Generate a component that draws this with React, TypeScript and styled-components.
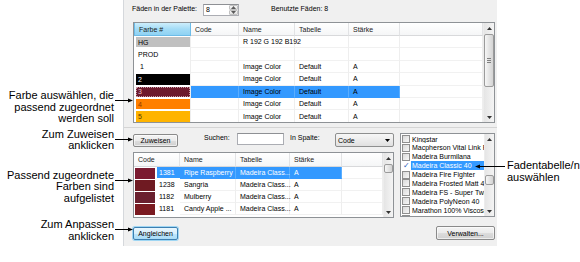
import React from "react";
import styled, { createGlobalStyle } from "styled-components";

const UI = `"Liberation Sans", Arial, sans-serif`;

const GlobalStyle = createGlobalStyle`
  html, body { margin: 0; padding: 0; background: #ffffff; }
  body { font-family: ${UI}; }
  * { box-sizing: border-box; }
`;

/* ---------- page + callouts ---------- */

const Stage = styled.div`
  display: flex;
  width: 580px;
  height: 262px;
  overflow: hidden;
  background: #ffffff;
`;

const NotesLeft = styled.div`
  position: relative;
  z-index: 2;
  flex: none;
  width: 123px;
  display: flex;
  flex-direction: column;
  align-items: flex-end;
  padding-top: 90px;
`;

const NotesRight = styled.div`
  position: relative;
  z-index: 2;
  flex: 1;
  display: flex;
  flex-direction: column;
  align-items: flex-start;
  padding-top: 160px;
`;

const LeftCallout = styled.div<{ $gap: number }>`
  display: flex;
  align-items: flex-start;
  margin-top: ${(p) => p.$gap}px;
  margin-right: -10px;
`;

const RightCallout = styled.div`
  display: flex;
  align-items: flex-start;
  margin-left: -22px;
`;

const NoteText = styled.div<{ $align: "left" | "right" }>`
  font-family: ${UI};
  font-size: 11px;
  line-height: 11.5px;
  color: #000;
  white-space: nowrap;
  text-align: ${(p) => p.$align};
`;

const PointRight = styled.svg`
  flex: none;
  display: block;
  margin: 8px 0 0 1px;
`;

const PointLeft = styled.svg`
  flex: none;
  display: block;
  margin: 4px 2px 0 0;
`;

const ArrowToRight = () => (
  <PointRight width="18" height="6" viewBox="0 0 18 6">
    <line x1="0" y1="2.5" x2="14" y2="2.5" stroke="#000" strokeWidth="1" />
    <polygon points="18,2.5 13,0.5 13,4.5" fill="#000" />
  </PointRight>
);

const ArrowToLeft = () => (
  <PointLeft width="30" height="6" viewBox="0 0 30 6">
    <line x1="4" y1="2.5" x2="30" y2="2.5" stroke="#000" strokeWidth="1" />
    <polygon points="0,2.5 5,0.5 5,4.5" fill="#000" />
  </PointLeft>
);

/* ---------- dialog panel ---------- */

const Panel = styled.div`
  flex: none;
  width: 374px;
  height: 246px;
  background: #f0f0f0;
  border-left: 1px solid #d5d8dc;
  display: flex;
  flex-direction: column;
  font-family: ${UI};
  font-size: 7px;
  color: #000;
`;

const TopBar = styled.div`
  height: 22px;
  display: flex;
  align-items: flex-start;
  padding: 4px 0 0 8px;
`;

const BarLabel = styled.span<{ $w?: number; $ml?: number }>`
  flex: none;
  width: ${(p) => (p.$w ? `${p.$w}px` : "auto")};
  margin-left: ${(p) => p.$ml ?? 0}px;
  line-height: 9px;
  white-space: nowrap;
`;

const Spinner = styled.div`
  flex: none;
  width: 36px;
  height: 12px;
  display: flex;
  background: #fff;
  border: 1px solid #abadb3;
  border-top-color: #8e9094;
`;

const SpinValue = styled.span`
  flex: 1;
  padding-left: 2px;
  line-height: 10px;
`;

const SpinButtons = styled.div`
  flex: none;
  width: 9px;
  display: flex;
  flex-direction: column;
`;

const SpinButton = styled.div`
  flex: 1;
  display: flex;
  align-items: center;
  justify-content: center;
  background: linear-gradient(#f6f6f6, #e2e2e2);
  border: 1px solid #c2c2c2;
  border-radius: 1px;
`;

const Tri = ({ up, color = "#5a5a5a" }: { up?: boolean; color?: string }) => (
  <svg width="5" height="3" viewBox="0 0 5 3" style={{ display: "block" }}>
    <polygon points={up ? "0,3 5,3 2.5,0" : "0,0 5,0 2.5,3"} fill={color} />
  </svg>
);

const Frame = styled.div<{ $w?: number; $h: number; $ml?: number; $mt?: number }>`
  flex: none;
  width: ${(p) => (p.$w ? `${p.$w}px` : "auto")};
  height: ${(p) => p.$h}px;
  margin-left: ${(p) => p.$ml ?? 0}px;
  margin-top: ${(p) => p.$mt ?? 0}px;
  display: flex;
  border: 1px solid #8e9296;
  background: #fff;
`;

const Grid = styled.div<{ $cols: string; $head: number; $row: number }>`
  flex: 1;
  display: grid;
  grid-template-columns: ${(p) => p.$cols};
  grid-template-rows: ${(p) => p.$head}px;
  grid-auto-rows: ${(p) => p.$row}px;
  align-content: start;
  overflow: hidden;
  background: #ffffff;
`;

const HeadCell = styled.div<{ $active?: boolean }>`
  display: flex;
  align-items: center;
  padding-left: 4px;
  white-space: nowrap;
  overflow: hidden;
  color: #1b1b1b;
  border-right: 1px solid ${(p) => (p.$active ? "#6cbce8" : "#e2e3e5")};
  border-bottom: 1px solid ${(p) => (p.$active ? "#6cbce8" : "#d8d9db")};
  border-left: ${(p) => (p.$active ? "1px solid #6cbce8" : "none")};
  background: ${(p) =>
    p.$active
      ? "linear-gradient(#cdeefc, #a4dcf6 50%, #8fd2f3)"
      : "linear-gradient(#ffffff, #f5f6f7)"};
`;

const Cell = styled.div<{ $sel?: boolean; $light?: boolean }>`
  display: flex;
  align-items: center;
  padding-left: 4px;
  white-space: nowrap;
  background: ${(p) => (p.$sel ? "#3399ff" : "transparent")};
  color: ${(p) => (p.$light ? "#ffffff" : "#000000")};
  border-right: 1px solid ${(p) => (p.$sel ? "#5aaeff" : "#eeeeee")};
  border-bottom: 1px solid ${(p) => (p.$sel ? "#3399ff" : "#f1f1f1")};
`;

const FarbeCell = styled.div`
  display: flex;
  padding: 1px 0 1px 2px;
  background: #fff;
  border-right: 1px solid #eeeeee;
`;

const Swatch = styled.div<{ $bg: string; $fg: string; $focus?: boolean; $indent?: number }>`
  flex: 1;
  display: flex;
  align-items: center;
  padding-left: ${(p) => 2 + (p.$indent ?? 0)}px;
  background: ${(p) => p.$bg};
  color: ${(p) => p.$fg};
  outline: ${(p) => (p.$focus ? "1px dotted #c79aa6" : "none")};
  outline-offset: -1px;
`;

/* ---------- scroll bars ---------- */

const ScrollBar = styled.div<{ $w: number }>`
  flex: none;
  width: ${(p) => p.$w}px;
  display: flex;
  flex-direction: column;
  background: linear-gradient(90deg, #e5e5e5, #f4f4f4);
  border-left: 1px solid #ececec;
`;

const ScrollArrow = styled.div`
  flex: none;
  height: 10px;
  display: flex;
  align-items: center;
  justify-content: center;
`;

const ScrollLane = styled.div`
  flex: 1;
  display: flex;
  flex-direction: column;
`;

const ScrollThumb = styled.div<{ $top: number; $h: number }>`
  margin: ${(p) => p.$top}px 0 0 0;
  height: ${(p) => p.$h}px;
  border: 1px solid #9b9b9b;
  border-radius: 2px;
  background: linear-gradient(90deg, #f6f6f6, #e4e4e4 50%, #d4d4d4);
  display: flex;
  flex-direction: column;
  align-items: center;
  justify-content: center;
  gap: 1px;
`;

const Grip = styled.span`
  display: block;
  width: 4px;
  height: 1px;
  background: #7f7f7f;
`;

const Scroll = ({ w, top, h, grip }: { w: number; top: number; h: number; grip?: boolean }) => (
  <ScrollBar $w={w}>
    <ScrollArrow>
      <Tri up color="#333" />
    </ScrollArrow>
    <ScrollLane>
      <ScrollThumb $top={top} $h={h}>
        {grip && (
          <>
            <Grip />
            <Grip />
            <Grip />
          </>
        )}
      </ScrollThumb>
    </ScrollLane>
    <ScrollArrow>
      <Tri color="#333" />
    </ScrollArrow>
  </ScrollBar>
);

/* ---------- bottom area ---------- */

const Divider = styled.div`
  flex: none;
  height: 1px;
  margin-top: 4px;
  background: #d5d5d5;
`;

const BottomGrid = styled.div`
  display: grid;
  grid-template-columns: 261px 95px;
  column-gap: 6px;
  row-gap: 8px;
  margin-top: 5px;
  padding-left: 9px;
`;

const Column = styled.div<{ $end?: boolean }>`
  display: flex;
  flex-direction: column;
  align-items: ${(p) => (p.$end ? "flex-end" : "stretch")};
`;

const ControlsRow = styled.div`
  height: 14px;
  display: flex;
  align-items: flex-start;
`;

const Button = styled.button<{ $w: number; $h: number; $mt?: number; $default?: boolean }>`
  flex: none;
  width: ${(p) => p.$w}px;
  height: ${(p) => p.$h}px;
  margin: ${(p) => p.$mt ?? 0}px 0 0 0;
  padding: 0;
  font-family: ${UI};
  font-size: 7px;
  color: #000;
  border-radius: 2px;
  border: 1px solid ${(p) => (p.$default ? "#3c7fb1" : "#8a8a8a")};
  background: ${(p) =>
    p.$default
      ? "linear-gradient(#e9f6fd, #d6effc 50%, #bfe6fb 50%, #a9dcf7)"
      : "linear-gradient(#f4f4f4, #ebebeb 50%, #dddddd 50%, #d0d0d0)"};
  box-shadow: ${(p) => (p.$default ? "0 0 0 1px #9fd6f3" : "inset 0 0 0 1px rgba(255,255,255,0.6)")};
`;

const TextBox = styled.div<{ $w: number }>`
  flex: none;
  width: ${(p) => p.$w}px;
  height: 12px;
  background: #fff;
  border: 1px solid #abadb3;
  border-top-color: #8e9094;
`;

const Combo = styled.div`
  flex: none;
  width: 59px;
  height: 14px;
  display: flex;
  align-items: center;
  justify-content: space-between;
  padding: 0 3px 0 2px;
  border: 1px solid #8e8f8f;
  border-radius: 2px;
  background: linear-gradient(#f7f7f7, #ececec 50%, #e0e0e0);
`;

const CodeCell = styled.div`
  display: flex;
  padding: 1px 0 0 1px;
  background: #fff;
`;

const MiniSwatch = styled.div<{ $bg: string }>`
  flex: none;
  width: 20px;
  height: 11px;
  background: ${(p) => p.$bg};
`;

const CodeText = styled.div<{ $sel?: boolean }>`
  flex: 1;
  display: flex;
  align-items: center;
  margin: -1px 0 1px 2px;
  padding-left: 2px;
  background: ${(p) => (p.$sel ? "#3399ff" : "transparent")};
  color: ${(p) => (p.$sel ? "#fff" : "#000")};
`;

const ThreadItems = styled.div`
  flex: 1;
  overflow: hidden;
  padding-top: 0.5px;
`;

const ThreadItem = styled.div`
  height: 8.9px;
  display: flex;
  align-items: center;
  white-space: nowrap;
`;

const Check = styled.span<{ $on?: boolean }>`
  flex: none;
  width: 8px;
  height: 8px;
  margin: 0 1px 0 1px;
  display: flex;
  align-items: center;
  justify-content: center;
  border: ${(p) => (p.$on ? "none" : "1px solid #8f8f8f")};
  background: ${(p) => (p.$on ? "transparent" : "linear-gradient(135deg, #d9d9d9, #f7f7f7)")};
  color: #2f62b8;
  font-size: 8px;
  line-height: 8px;
`;

const ThreadName = styled.span<{ $sel?: boolean }>`
  flex: 1;
  height: 8.9px;
  line-height: 9px;
  padding-left: 1px;
  overflow: hidden;
  background: ${(p) => (p.$sel ? "#3399ff" : "transparent")};
  color: ${(p) => (p.$sel ? "#fff" : "#000")};
`;

/* ---------- data ---------- */

type TopRow = {
  id: string;
  bg: string;
  fg: string;
  name?: string;
  table?: string;
  strength?: string;
  selected?: boolean;
  indent?: number;
};

const TOP_ROWS: TopRow[] = [
  { id: "HG", bg: "#c0c0c0", fg: "#000", name: "R 192 G 192 B192" },
  { id: "PROD", bg: "#ffffff", fg: "#000" },
  { id: "1", bg: "#ffffff", fg: "#000", name: "Image Color", table: "Default", strength: "A", indent: 2 },
  { id: "2", bg: "#000000", fg: "#ffffff", name: "Image Color", table: "Default", strength: "A" },
  { id: "3", bg: "#6e1a2d", fg: "#e9c2c9", name: "Image Color", table: "Default", strength: "A", selected: true },
  { id: "4", bg: "#ff7f00", fg: "#8a3d00", name: "Image Color", table: "Default", strength: "A" },
  { id: "5", bg: "#ffb400", fg: "#5a3c00", name: "Image Color", table: "Default", strength: "A" },
];

const MATCHES = [
  { bg: "#7b1a30", code: "1381", name: "Ripe Raspberry", table: "Madeira Class...", strength: "A", selected: true },
  { bg: "#6f1a22", code: "1238", name: "Sangria", table: "Madeira Class...", strength: "A" },
  { bg: "#6a1f2e", code: "1182", name: "Mulberry", table: "Madeira Class...", strength: "A" },
  { bg: "#7a1a20", code: "1181", name: "Candy Apple ...", table: "Madeira Class...", strength: "A" },
];

const THREADS = [
  "Kingstar",
  "Macpherson Vital Link Rayon",
  "Madeira Burmilana",
  "Madeira Classic 40",
  "Madeira Fire Fighter",
  "Madeira Frosted Matt 40",
  "Madeira FS - Super Twist",
  "Madeira PolyNeon 40",
  "Marathon 100% Viscose",
  "Marathon Polyester",
];

/* ---------- app ---------- */

export default function App() {
  return (
    <>
      <GlobalStyle />
      <Stage>
        <NotesLeft>
          <LeftCallout $gap={0}>
            <NoteText $align="right">
              Farbe auswählen, die
              <br />
              passend zugeordnet
              <br />
              werden soll
            </NoteText>
            <ArrowToRight />
          </LeftCallout>
          <LeftCallout $gap={4}>
            <NoteText $align="right">
              Zum Zuweisen
              <br />
              anklicken
            </NoteText>
            <ArrowToRight />
          </LeftCallout>
          <LeftCallout $gap={18}>
            <NoteText $align="right">
              Passend zugeordnete
              <br />
              Farben sind
              <br />
              aufgelistet
            </NoteText>
            <ArrowToRight />
          </LeftCallout>
          <LeftCallout $gap={15}>
            <NoteText $align="right">
              Zum Anpassen
              <br />
              anklicken
            </NoteText>
            <ArrowToRight />
          </LeftCallout>
        </NotesLeft>

        <Panel>
          <TopBar>
            <BarLabel $w={71}>Fäden in der Palette:</BarLabel>
            <Spinner>
              <SpinValue>8</SpinValue>
              <SpinButtons>
                <SpinButton>
                  <Tri up />
                </SpinButton>
                <SpinButton>
                  <Tri />
                </SpinButton>
              </SpinButtons>
            </Spinner>
            <BarLabel $ml={32}>Benutzte Fäden: 8</BarLabel>
          </TopBar>

          <Frame $w={362} $h={101} $ml={9}>
            <Grid $cols="57px 48px 56px 54px 51px 1fr" $head={13} $row={12.4}>
              <HeadCell $active>Farbe #</HeadCell>
              <HeadCell>Code</HeadCell>
              <HeadCell>Name</HeadCell>
              <HeadCell>Tabelle</HeadCell>
              <HeadCell>Stärke</HeadCell>
              <HeadCell />
              {TOP_ROWS.map((r) => (
                <React.Fragment key={r.id}>
                  <FarbeCell>
                    <Swatch $bg={r.bg} $fg={r.fg} $focus={r.selected} $indent={r.indent}>
                      {r.id}
                    </Swatch>
                  </FarbeCell>
                  <Cell $sel={r.selected} />
                  <Cell $sel={r.selected}>{r.name}</Cell>
                  <Cell $sel={r.selected}>{r.table}</Cell>
                  <Cell $sel={r.selected}>{r.strength}</Cell>
                  <Cell />
                </React.Fragment>
              ))}
            </Grid>
            <Scroll w={11} top={1} h={53} grip />
          </Frame>

          <Divider />

          <BottomGrid>
            <Column>
              <ControlsRow>
                <Button $w={45} $h={13} $mt={1}>
                  Zuweisen
                </Button>
                <BarLabel $w={33} $ml={26}>
                  Suchen:
                </BarLabel>
                <TextBox $w={47} />
                <BarLabel $w={45} $ml={6}>
                  In Spalte:
                </BarLabel>
                <Combo>
                  <span>Code</span>
                  <Tri color="#000" />
                </Combo>
              </ControlsRow>
              <Frame $h={66} $mt={5}>
                <Grid $cols="46px 56px 54px 52px 1fr" $head={14} $row={12}>
                  <HeadCell>Code</HeadCell>
                  <HeadCell>Name</HeadCell>
                  <HeadCell>Tabelle</HeadCell>
                  <HeadCell>Stärke</HeadCell>
                  <HeadCell />
                  {MATCHES.map((m) => (
                    <React.Fragment key={m.code}>
                      <CodeCell>
                        <MiniSwatch $bg={m.bg} />
                        <CodeText $sel={m.selected}>{m.code}</CodeText>
                      </CodeCell>
                      <Cell $sel={m.selected} $light={m.selected}>
                        {m.name}
                      </Cell>
                      <Cell $sel={m.selected} $light={m.selected}>
                        {m.table}
                      </Cell>
                      <Cell $sel={m.selected} $light={m.selected}>
                        {m.strength}
                      </Cell>
                      <Cell />
                    </React.Fragment>
                  ))}
                </Grid>
                <Scroll w={10} top={1} h={9} />
              </Frame>
            </Column>

            <Column>
              <Frame $h={84}>
                <ThreadItems>
                  {THREADS.map((t) => {
                    const on = t === "Madeira Classic 40";
                    return (
                      <ThreadItem key={t}>
                        <Check $on={on}>{on ? "✓" : ""}</Check>
                        <ThreadName $sel={on}>{t}</ThreadName>
                      </ThreadItem>
                    );
                  })}
                </ThreadItems>
                <Scroll w={10} top={31} h={10} />
              </Frame>
            </Column>

            <Column>
              <Button $w={45} $h={13} $mt={1} $default>
                Angleichen
              </Button>
            </Column>
            <Column $end>
              <Button $w={59} $h={14}>
                Verwalten...
              </Button>
            </Column>
          </BottomGrid>
        </Panel>

        <NotesRight>
          <RightCallout>
            <ArrowToLeft />
            <NoteText $align="left">
              Fadentabelle/n
              <br />
              auswählen
            </NoteText>
          </RightCallout>
        </NotesRight>
      </Stage>
    </>
  );
}
